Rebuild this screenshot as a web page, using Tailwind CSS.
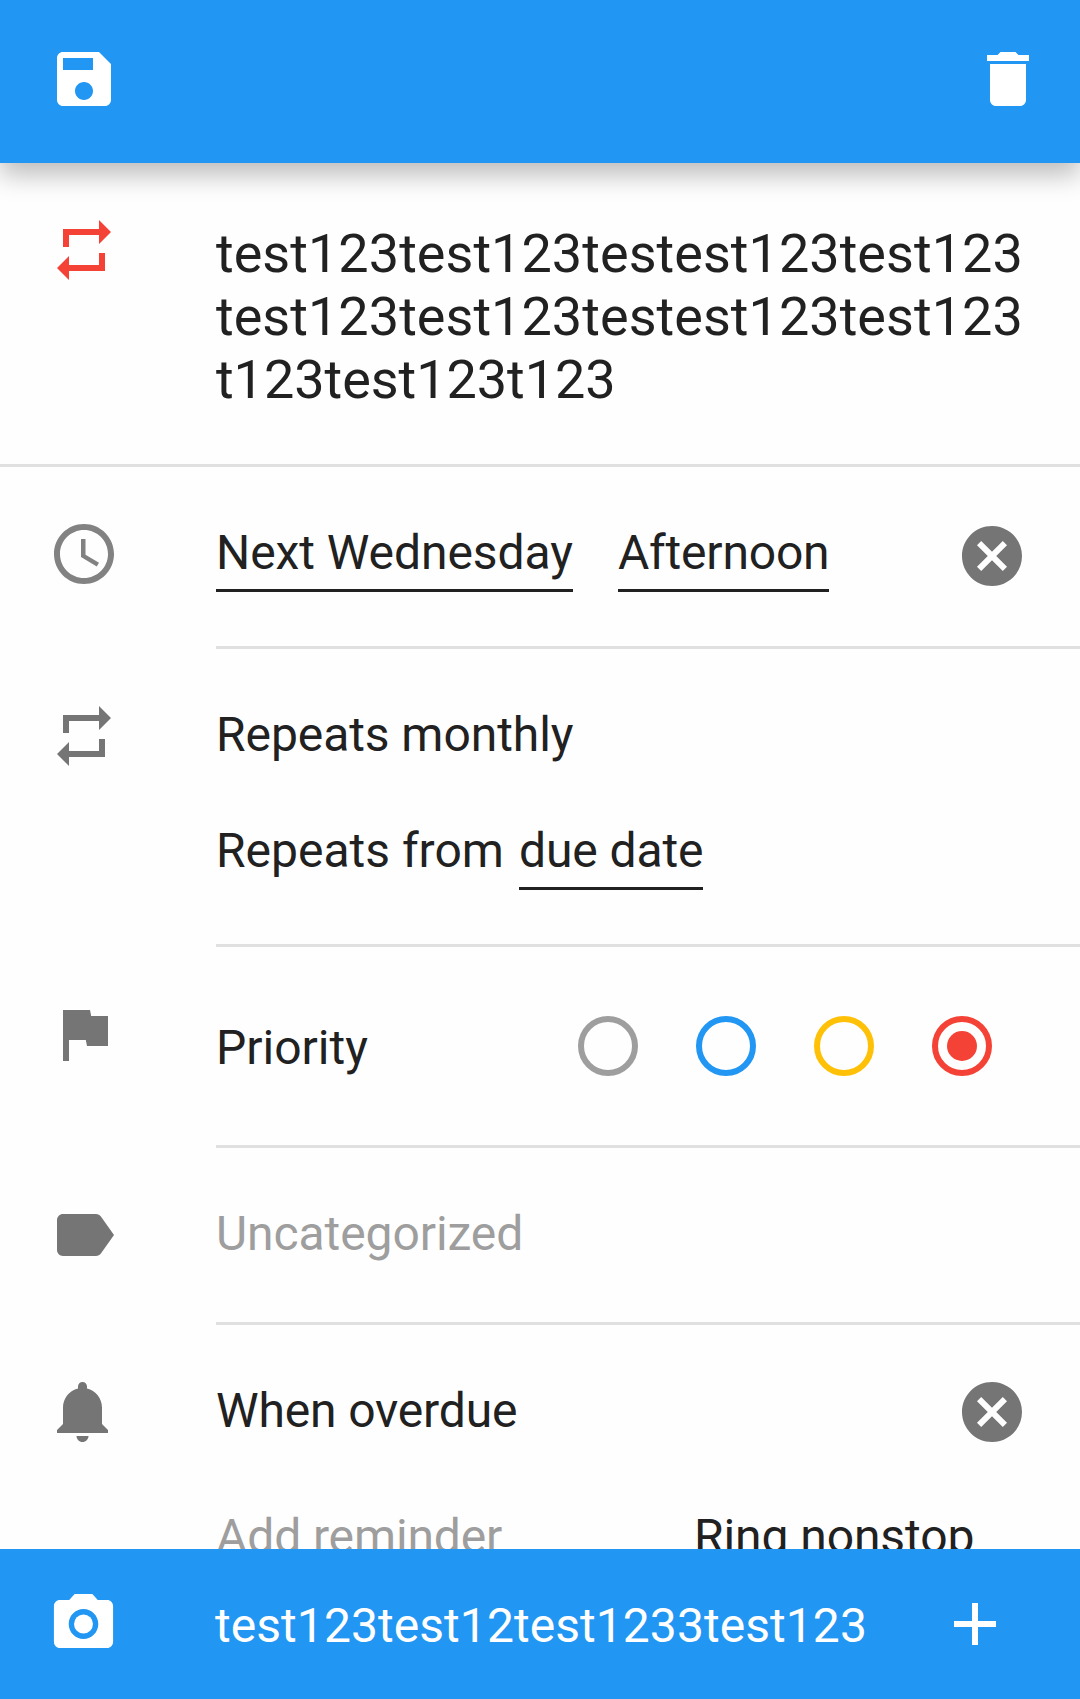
<!DOCTYPE html>
<html lang="en">
<head>
<meta charset="utf-8">
<title>Edit task</title>
<script src="https://cdn.jsdelivr.net/npm/@tailwindcss/browser@4"></script>
</head>
<body class="bg-[#fefefe]">
<svg class="hidden">
  <symbol id="repeat" viewBox="0 0 24 24"><path d="M7 7h10v3l4-4-4-4v3H5v6h2V7zm10 10H7v-3l-4 4 4 4v-3h12v-6h-2v4z"/></symbol>
  <symbol id="cancel" viewBox="0 0 24 24"><path d="M12 2C6.470 2 2 6.470 2 12s4.470 10 10 10 10-4.470 10-10S17.530 2 12 2zm5 13.590L15.590 17 12 13.410 8.410 17 7 15.590 10.590 12 7 8.410 8.410 7 12 10.590 15.590 7 17 8.410 13.410 12 17 15.590z"/></symbol>
</svg>
<div class="flex h-[1699px] w-[1080px] flex-col overflow-hidden bg-[#fefefe] font-['Roboto',sans-serif] text-[48px] leading-[56px] text-[#212121]">
  <header class="z-10 flex h-[163px] shrink-0 items-start justify-between bg-[#2196f3] px-[48px] pr-[36px] pt-[43px] text-white shadow-[0_12px_24px_rgba(0,0,0,0.26)]">
    <svg class="size-[72px] fill-current" viewBox="0 0 24 24"><path d="M17 3H5c-1.110 0-2 .9-2 2v14c0 1.100.89 2 2 2h14c1.100 0 2-.9 2-2V7l-4-4zm-5 16c-1.660 0-3-1.340-3-3s1.340-3 3-3 3 1.340 3 3-1.340 3-3 3zm3-10H5V5h10v4z"/></svg>
    <svg class="size-[72px] fill-current" viewBox="0 0 24 24"><path d="M6 19c0 1.100.9 2 2 2h8c1.100 0 2-.9 2-2V7H6v12zM19 4h-3.500l-1-1h-5l-1 1H5v2h14V4z"/></svg>
  </header>

  <main class="flex min-h-0 flex-1 flex-col overflow-hidden">
    <section class="flex h-[304px] shrink-0 border-b-3 border-[#e0e0e0] pl-[48px]">
      <svg class="mt-[51px] size-[72px] shrink-0 fill-[#f44336]"><use href="#repeat"/></svg>
      <div class="ml-[96px] mt-[59px] text-[54px] leading-[63px]"><span class="tracking-[0.035px]">test123test123testest123test123<br>test123test123testest123test123</span><br><span class="tracking-[-0.05px]">t123test123t123</span></div>
    </section>

    <section class="flex h-[182px] shrink-0 pl-[48px]">
      <svg class="mt-[51px] size-[72px] shrink-0 fill-[#757575] opacity-90" viewBox="0 0 24 24"><path d="M11.990 2C6.470 2 2 6.480 2 12s4.470 10 9.990 10C17.520 22 22 17.520 22 12S17.520 2 11.990 2zM12 20c-4.420 0-8-3.580-8-8s3.580-8 8-8 8 3.580 8 8-3.580 8-8 8zm.5-13H11v6l5.250 3.150.75-1.230-4.500-2.670z"/></svg>
      <div class="ml-[96px] flex flex-1 items-start border-b-3 border-[#e0e0e0]">
        <span class="mt-[58px] h-[67px] w-[357px] whitespace-nowrap border-b-3 border-[#212121] tracking-[-0.07px]">Next Wednesday</span>
        <span class="ml-[45px] mt-[58px] h-[67px] w-[211px] border-b-3 border-[#212121] tracking-[-0.2px]">Afternoon</span>
        <svg class="ml-auto mr-[52px] mt-[53px] size-[72px] fill-[#757575]"><use href="#cancel"/></svg>
      </div>
    </section>

    <section class="flex h-[298px] shrink-0 pl-[48px]">
      <svg class="mt-[51px] size-[72px] shrink-0 fill-[#757575]"><use href="#repeat"/></svg>
      <div class="ml-[96px] flex-1 border-b-3 border-[#e0e0e0] pt-[58px]">
        <div class="tracking-[-0.07px]">Repeats monthly</div>
        <div class="mt-[60px] flex"><span class="w-[303px]">Repeats from</span><span class="h-[67px] w-[184px] whitespace-nowrap border-b-3 border-[#212121] tracking-[-0.1px]">due date</span></div>
      </div>
    </section>

    <section class="flex h-[201px] shrink-0 pl-[48px]">
      <svg class="mt-[51px] size-[72px] shrink-0 fill-[#757575]" viewBox="0 0 24 24"><path d="M14.400 6L14 4H5v17h2v-7h5.600l.4 2h7V6z"/></svg>
      <div class="ml-[96px] flex flex-1 items-start border-b-3 border-[#e0e0e0]">
        <span class="mt-[73px]">Priority</span>
        <div class="ml-auto mr-[88px] mt-[69px] flex gap-[58px]">
          <span class="size-[60px] rounded-full border-6 border-[#9e9e9e]"></span>
          <span class="size-[60px] rounded-full border-6 border-[#2196f3]"></span>
          <span class="size-[60px] rounded-full border-6 border-[#ffc107]"></span>
          <span class="flex size-[60px] items-center justify-center rounded-full border-6 border-[#f44336]"><span class="size-[30px] rounded-full bg-[#f44336]"></span></span>
        </div>
      </div>
    </section>

    <section class="flex h-[177px] shrink-0 pl-[48px]">
      <svg class="mt-[51px] size-[72px] shrink-0 fill-[#757575]" viewBox="0 0 24 24"><path d="M17.630 5.840C17.270 5.330 16.670 5 16 5L5 5.010C3.900 5.010 3 5.900 3 7v10c0 1.100.9 1.990 2 1.990L16 19c.67 0 1.270-.33 1.630-.84L22 12l-4.370-6.160z"/></svg>
      <div class="ml-[96px] flex-1 border-b-3 border-[#e0e0e0] pt-[58px] tracking-[-0.08px] text-[#9e9e9e]">Uncategorized</div>
    </section>

    <section class="flex shrink-0 pl-[48px]">
      <svg class="mt-[51px] size-[72px] shrink-0 fill-[#757575]" viewBox="0 0 24 24"><path d="M11.500 22c1.100 0 2-.9 2-2h-4c0 1.100.9 2 2 2zm6.500-6v-5.500c0-3.070-2.130-5.640-5-6.320V3.500c0-.83-.67-1.500-1.500-1.500S10 2.670 10 3.500v.68c-2.870.68-5 3.250-5 6.320V16l-2 2v1h17v-1l-2-2z"/></svg>
      <div class="ml-[96px] flex-1">
        <div class="flex h-[123px] items-start justify-between pr-[52px]">
          <span class="mt-[58px] tracking-[-0.15px]">When overdue</span>
          <svg class="mt-[51px] size-[72px] fill-[#757575]"><use href="#cancel"/></svg>
        </div>
        <div class="flex pt-[61px]">
          <span class="w-[478px] tracking-[-0.12px] text-[#9e9e9e]">Add reminder</span>
          <span class="tracking-[-0.08px]">Ring nonstop</span>
        </div>
      </div>
    </section>
  </main>

  <footer class="flex h-[150px] shrink-0 items-start bg-[#2196f3] pl-[48px] text-white">
    <svg class="mt-[39px] h-[72px] w-[71px] shrink-0 fill-current" viewBox="0 0 24 24" preserveAspectRatio="none"><circle cx="12" cy="12" r="3.200"/><path d="M9 2L7.170 4H4c-1.100 0-2 .9-2 2v12c0 1.100.9 2 2 2h16c1.100 0 2-.9 2-2V6c0-1.100-.9-2-2-2h-3.170L15 2H9zm3 15c-2.760 0-5-2.240-5-5s2.240-5 5-5 5 2.240 5 5-2.240 5-5 5z"/></svg>
    <span class="ml-[96px] mt-[49px] tracking-[0.06px]">test123test12test1233test123</span>
    <svg class="ml-auto mr-[69px] mt-[39px] size-[72px] fill-current" viewBox="0 0 24 24"><path d="M19 13h-6v6h-2v-6H5v-2h6V5h2v6h6v2z"/></svg>
  </footer>
</div>
</body>
</html>
